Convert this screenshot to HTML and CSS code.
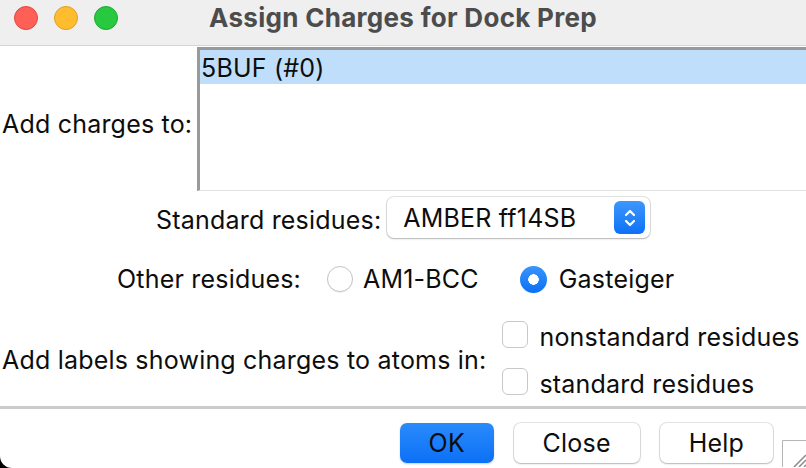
FILE: index.html
```html
<!DOCTYPE html>
<html lang="en">
<head>
    <meta charset="UTF-8">
    <title>Assign Charges for Dock Prep</title>
    <link rel="stylesheet" href="styles.css">
</head>
<body>
    <div class="window">
        <div class="titlebar">
            <div class="lights">
                <span class="light red"></span>
                <span class="light yellow"></span>
                <span class="light green"></span>
            </div>
            <div class="title">Assign Charges for Dock Prep</div>
        </div>

        <div class="content">
            <div class="row models">
                <span class="lbl">Add charges to:</span>
                <div class="listbox">
                    <div class="item selected">5BUF (#0)</div>
                </div>
            </div>

            <div class="row std">
                <span class="lbl">Standard residues:</span>
                <div class="popup">
                    <span class="popup-text">AMBER ff14SB</span>
                    <span class="stepper">
                        <svg width="14" height="22" viewBox="0 0 14 22">
                            <path d="M3 8 L7 4 L11 8" fill="none" stroke="#fff" stroke-width="2.2" stroke-linecap="round" stroke-linejoin="round"/>
                            <path d="M3 14 L7 18 L11 14" fill="none" stroke="#fff" stroke-width="2.2" stroke-linecap="round" stroke-linejoin="round"/>
                        </svg>
                    </span>
                </div>
            </div>

            <div class="row other">
                <span class="lbl">Other residues:</span>
                <label class="radio"><span class="dot"></span>AM1-BCC</label>
                <label class="radio"><span class="dot on"></span>Gasteiger</label>
            </div>

            <div class="row labels">
                <span class="lbl">Add labels showing charges to atoms in:</span>
                <div class="checks">
                    <label class="check"><span class="box"></span>nonstandard residues</label>
                    <label class="check"><span class="box"></span>standard residues</label>
                </div>
            </div>
        </div>

        <div class="separator"></div>

        <div class="buttons">
            <button class="btn primary">OK</button>
            <button class="btn">Close</button>
            <button class="btn">Help</button>
            <div class="grip">
                <svg width="24" height="27" viewBox="0 0 24 27">
                    <path d="M0.5 27 V0.5 H24" fill="none" stroke="#b5b5b5" stroke-width="1"/>
                    <path d="M12 27 L24 15 M17 27 L24 20 M22 27 L24 25" stroke="#8a8a8a" stroke-width="1.5"/>
                </svg>
            </div>
        </div>
    </div>
</body>
</html>
```

FILE: styles.css
```css
body {
    margin: 0;
    background: #000;
    font-family: Inter, "Liberation Sans", sans-serif;
    color: #0d0d0d;
}

.window {
    width: 806px;
    height: 468px;
    background: #fff;
    overflow: hidden;
    border-bottom-left-radius: 12px;
    font-size: 25px;
    letter-spacing: 0.2px;
}

.titlebar {
    height: 45px;
    background: #efefef;
    border-bottom: 1px solid #d6d6d6;
    display: grid;
    grid-template-columns: 1fr auto 1fr;
    align-items: center;
}

.lights {
    display: flex;
    gap: 16px;
    padding-left: 14px;
    margin-top: -9px;
}

.light {
    width: 24px;
    height: 24px;
    border-radius: 50%;
    box-sizing: border-box;
}

.red { background: #fe5f57; border: 1px solid #e2463f; }
.yellow { background: #febc2e; border: 1px solid #e0a022; }
.green { background: #28c840; border: 1px solid #1aab2c; }

.title {
    font-weight: 700;
    font-size: 26px;
    color: #4c4c4c;
    margin-top: -10px;
    letter-spacing: 0.3px;
}

.row {
    display: flex;
    align-items: center;
}

.models {
    margin-top: 1px;
}

.models .lbl {
    width: 195px;
    padding-left: 2px;
    padding-top: 10px;
}

.listbox {
    flex: 1;
    height: 140px;
    margin-right: -10px;
    border-top: 3px solid #9a9a9a;
    border-left: 3px solid #9a9a9a;
    border-bottom: 1px solid #e2e2e2;
    background: #fff;
}

.item {
    height: 34px;
    line-height: 36px;
    padding-left: 1px;
}

.selected {
    background: #bedefb;
}

.std {
    margin-top: 6px;
    padding-left: 156px;
    gap: 6px;
}

.std .lbl {
    padding-top: 4px;
}

.popup {
    width: 263px;
    height: 41px;
    box-sizing: border-box;
    border-radius: 7px;
    background: #fff;
    box-shadow: 0 0 0 1px rgba(0, 0, 0, 0.1), 0 1px 2px rgba(0, 0, 0, 0.22);
    display: flex;
    align-items: center;
    justify-content: space-between;
    padding: 0 5px 0 16px;
}

.stepper {
    width: 31px;
    height: 33px;
    border-radius: 6px;
    background: linear-gradient(#3d97fc, #0d71f6);
    display: flex;
    align-items: center;
    justify-content: center;
}

.other {
    margin-top: 21px;
    height: 40px;
    padding-left: 117px;
}

.radio {
    display: flex;
    align-items: center;
    gap: 10px;
}

.other .lbl {
    margin-right: 26px;
}

.radio + .radio {
    margin-left: 41px;
}

.radio + .radio .dot {
    margin-right: 2px;
}

.dot {
    width: 26px;
    height: 26px;
    box-sizing: border-box;
    border-radius: 50%;
    border: 1px solid #c4c4c4;
    background: #fff;
    box-shadow: 0 1px 1px rgba(0, 0, 0, 0.06);
}

.dot.on {
    width: 27px;
    height: 27px;
    border: none;
    background: radial-gradient(circle, #fff 0 5px, transparent 5.5px), linear-gradient(#3a94fb, #0b70f5);
}

.labels {
    margin-top: 15px;
    height: 92px;
    padding-left: 2px;
    gap: 16px;
}

.checks {
    display: flex;
    flex-direction: column;
    gap: 14px;
}

.check {
    display: flex;
    align-items: center;
    gap: 11px;
    height: 33px;
}

.box {
    width: 26px;
    height: 27px;
    box-sizing: border-box;
    border: 1px solid #c8c8c8;
    border-radius: 6px;
    background: #fff;
    margin-top: -4px;
}

.separator {
    height: 3px;
    background: #cbcbcb;
}

.buttons {
    display: flex;
    justify-content: flex-end;
    align-items: flex-start;
    gap: 20px;
    padding-top: 14px;
}

.btn {
    height: 40px;
    padding: 0 29px;
    font-family: inherit;
    font-size: 25px;
    letter-spacing: 0.2px;
    color: #0d0d0d;
    background: #fff;
    border: none;
    border-radius: 7px;
    box-shadow: 0 0 0 1px rgba(0, 0, 0, 0.1), 0 1px 2px rgba(0, 0, 0, 0.2);
}

.btn.primary {
    width: 94px;
    background: linear-gradient(#2a8bfc, #0c70f6);
    box-shadow: 0 1px 2px rgba(0, 0, 0, 0.2);
}

.grip {
    margin-top: 17px;
    margin-left: -11px;
}
```
